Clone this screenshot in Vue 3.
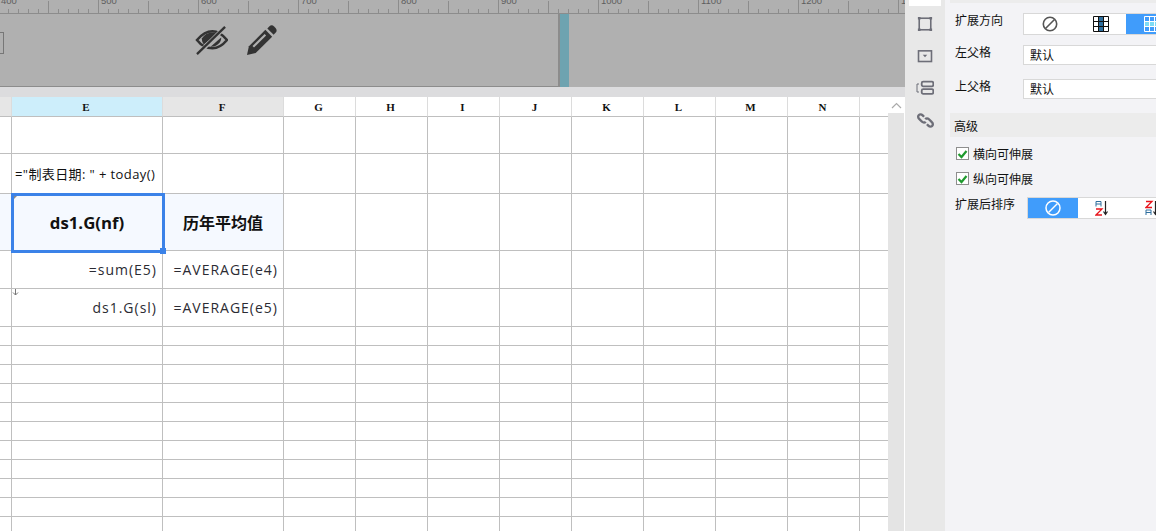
<template>
  <div class="app">
    <div class="main">
      <div class="ruler">
        <div v-for="n in rulerMarks" :key="n" class="ruler-seg"><span>{{ n }}</span></div>
      </div>
      <div class="canvas">
        <div class="page">
          <div class="page-box"></div>
          <div class="page-tools">
            <svg width="33" height="31" viewBox="0 0 34 32">
              <path d="M2 15.5C8 8.5 13 6.5 18 6.5s10 3 15 9c-5 6-10 8.500-15 8.500S7 22 2 15.500Z" fill="none" stroke="#333" stroke-width="2.600" />
              <path d="M7 14c3-5 8-7 13-6l3 1-14 11c-1.500-2-2-4-2-6Z" fill="#333" />
              <path d="M16 22.500 27 13c.5 5-5 10-11 9.500Z" fill="#333" />
              <path d="M2 31 31 2" stroke="#b0b0b0" stroke-width="4.500" />
              <path d="M2 30 31 2" stroke="#333" stroke-width="2.400" />
            </svg>
            <svg width="31" height="31" viewBox="0 0 32 32">
              <path d="M1 31 3 22 20 5 27 12 10 29Z" fill="#333" />
              <path d="M7.500 22.500 20 10" stroke="#b0b0b0" stroke-width="2.200" />
              <path d="M22 3.500 24 1.500c1.500-1.500 3.500-1.500 5 0l1.500 1.500c1.500 1.500 1.500 3.500 0 5L28.500 10Z" fill="#333" />
            </svg>
          </div>
        </div>
        <div class="bar"></div>
      </div>
      <div class="band"></div>
      <div class="sheet-wrap">
        <div class="sheet">
          <template v-for="(r, ri) in rows" :key="ri">
            <div
              v-for="(c, ci) in columns"
              :key="ci"
              class="cell"
              :class="cellClass(ri, ci)"
              :style="{ height: r + 'px' }"
            >
              {{ cellText(ri, ci) }}
              <template v-if="ri === 3 && ci === 1">
                <span class="select-box"></span>
                <span class="select-handle"></span>
                <span class="corner-mark"></span>
              </template>
              <svg v-if="ri === 5 && ci === 1" class="down-mark" width="7" height="7" viewBox="0 0 7 7">
                <path d="M3.500 0v6M1 3.500 3.500 6 6 3.500" fill="none" stroke="#777" />
              </svg>
            </div>
          </template>
        </div>
        <div class="scroll">
          <div class="scroll-up">
            <svg width="11" height="7" viewBox="0 0 11 7"><path d="M1 6 5.500 1.500 10 6" fill="none" stroke="#aaa" stroke-width="1.200" /></svg>
          </div>
        </div>
      </div>
    </div>

    <div class="strip">
      <div class="strip-top"></div>
      <svg width="16" height="16" viewBox="0 0 18 18" class="strip-icon first">
        <rect x="2.500" y="2.500" width="13" height="13" fill="none" stroke="#6d6e78" stroke-width="1.800" />
        <path d="M1 1h3v3H1zM14 1h3v3h-3zM1 14h3v3H1zM14 14h3v3h-3z" fill="#6d6e78" />
      </svg>
      <svg width="16" height="16" viewBox="0 0 18 18" class="strip-icon second">
        <rect x="1.700" y="3.200" width="14.600" height="12" fill="none" stroke="#6d6e78" stroke-width="1.800" />
        <path d="M6.500 7.500h5L9 10.500Z" fill="#6d6e78" />
      </svg>
      <svg width="18" height="18" viewBox="0 0 18 18" class="strip-icon third">
        <rect x="5.700" y="2.700" width="11.600" height="4.600" rx="1.500" fill="none" stroke="#6d6e78" stroke-width="1.800" />
        <rect x="5.700" y="10.200" width="11.600" height="4.600" rx="1.500" fill="none" stroke="#6d6e78" stroke-width="1.800" />
        <path d="M3 5H1v8h2" fill="none" stroke="#6d6e78" />
      </svg>
      <svg width="17" height="17" viewBox="0 0 18 18" class="strip-icon">
        <path d="M7.500 5 6 3.500C4.500 2 2.800 2.300 2 3.200 1 4.200.9 6 2.300 7.300l3 3c1.300 1.200 3 1.200 3.900 0M10.500 13l1.500 1.500c1.500 1.500 3.200 1.200 4 .3 1-1 1.100-2.800-.3-4.100l-3-3c-1.300-1.200-3-1.200-3.900 0" fill="none" stroke="#6d6e78" stroke-width="2.500" />
      </svg>
    </div>

    <div class="panel">
      <div class="panel-top"></div>
      <div class="form-row first-row">
        <span class="label">扩展方向</span>
        <div class="seg seg-dir">
          <div class="seg-item">
            <svg width="16" height="16" viewBox="0 0 16 16">
              <circle cx="8" cy="8" r="6.700" fill="none" stroke="#555" stroke-width="1.600" />
              <path d="M3.500 12.500 12.500 3.500" stroke="#555" stroke-width="1.600" />
            </svg>
          </div>
          <div class="seg-item">
            <svg width="16" height="16" viewBox="0 0 16 16">
              <rect x="5.500" y="1" width="5" height="14" fill="#2e6f9e" />
              <path d="M.5.500h15v15H.5zM5.500.500v15M10.500.500v15M.5 5.500h15M.5 10.500h15" fill="none" stroke="#111" />
            </svg>
          </div>
          <div class="seg-item active">
            <svg width="16" height="16" viewBox="0 0 16 16">
              <rect x="1" y="6" width="14" height="4" fill="#7fdcf5" />
              <path d="M.5.500h15v15H.5zM5.500.500v15M10.500.500v15M.5 5.500h15M.5 10.500h15" fill="none" stroke="#fff" />
            </svg>
          </div>
        </div>
      </div>
      <div class="form-row">
        <span class="label">左父格</span>
        <div class="input">默认</div>
      </div>
      <div class="form-row">
        <span class="label">上父格</span>
        <div class="input">默认</div>
      </div>
      <div class="section">高级</div>
      <label class="check first-check"><span class="box"><svg width="11" height="10" viewBox="0 0 11 10"><path d="M1.500 5 4.500 8 9.500 2" fill="none" stroke="#1f9a2e" stroke-width="2.200" /></svg></span>横向可伸展</label>
      <label class="check"><span class="box"><svg width="11" height="10" viewBox="0 0 11 10"><path d="M1.500 5 4.500 8 9.500 2" fill="none" stroke="#1f9a2e" stroke-width="2.200" /></svg></span>纵向可伸展</label>
      <div class="sort-row">
        <span class="sort-label">扩展后排序</span>
        <div class="seg seg-sort">
          <div class="seg-item active">
            <svg width="16" height="16" viewBox="0 0 16 16">
              <circle cx="8" cy="8" r="7" fill="none" stroke="#fff" stroke-width="1.500" />
              <path d="M3.500 12.500 12.500 3.500" stroke="#fff" stroke-width="1.500" />
            </svg>
          </div>
          <div class="seg-item">
            <svg width="16" height="16" viewBox="0 0 16 16">
              <path d="M1 6.500V1.500h5v5M1 4h5" fill="none" stroke="#2e6f9e" />
              <path d="M1 9h6L1 15h6" fill="none" stroke="#e8141c" stroke-width="1.300" />
              <path d="M10.500 1v13M8.500 11.500l2 3 2-3" fill="none" stroke="#222" stroke-width="1.200" />
            </svg>
          </div>
          <div class="seg-item">
            <svg width="16" height="16" viewBox="0 0 16 16">
              <path d="M1 1.500h6L1 7.500h6" fill="none" stroke="#e8141c" stroke-width="1.300" />
              <path d="M1 15V10h5v5M1 12.500h5" fill="none" stroke="#2e6f9e" />
              <path d="M10.500 1v13M8.500 11.500l2 3 2-3" fill="none" stroke="#222" stroke-width="1.200" />
            </svg>
          </div>
        </div>
      </div>
    </div>
  </div>
</template>

<script setup>
const rulerMarks = [400, 500, 600, 700, 800, 900, 1000, 1100, 1200, 1300]

const letters = ['', 'E', 'F', 'G', 'H', 'I', 'J', 'K', 'L', 'M', 'N', '']
const columns = [12, 151, 121, 72, 72, 72, 72, 72, 72, 72, 72, 28]
const rows = [20, 37, 40, 57, 38, 38, 19, 19, 19, 19, 19, 19, 19, 19, 19, 19, 19]

// 单元格内容，key 为 行-列
const contents = {
  '2-1': '="制表日期: " + today()',
  '3-1': 'ds1.G(nf)',
  '3-2': '历年平均值',
  '4-1': '=sum(E5)',
  '4-2': '=AVERAGE(e4)',
  '5-1': 'ds1.G(sl)',
  '5-2': '=AVERAGE(e5)'
}

const cellText = (ri, ci) => (ri === 0 ? letters[ci] : contents[`${ri}-${ci}`] || '')

const cellClass = (ri, ci) => ({
  head: ri === 0,
  'head-side': ri === 0 && (ci === 0 || ci === 2),
  'head-active': ri === 0 && ci === 1,
  formula: ri === 2 && ci === 1,
  title: ri === 3 && (ci === 1 || ci === 2),
  'title-latin': ri === 3 && ci === 1,
  tinted: ri === 3 && ci <= 2,
  num: (ri === 4 || ri === 5) && (ci === 1 || ci === 2),
  last: ci === columns.length - 1
})
</script>

<style scoped>
.app {
  display: flex;
  width: 1156px;
  height: 531px;
  overflow: hidden;
  background: #fff;
  font-family: "Noto Sans CJK SC", "Open Sans", sans-serif;
  color: #222;
}
.main {
  width: 905px;
  flex: none;
  display: flex;
  flex-direction: column;
}
.ruler {
  height: 13px;
  flex: none;
  display: flex;
  margin-left: -2px;
  overflow: hidden;
  background-color: #b0b0b0;
  border-bottom: 1px solid #8c8c8c;
  box-sizing: content-box;
}
.ruler-seg {
  width: 100px;
  flex: none;
  height: 13px;
  box-sizing: border-box;
  border-left: 1px solid #8c8c8c;
  overflow: hidden;
  font: 9.5px/10px "Liberation Sans", sans-serif;
  color: #5e5e5e;
  background:
    linear-gradient(#8c8c8c, #8c8c8c) 49px 1px / 1px 12px no-repeat,
    repeating-linear-gradient(90deg, #8c8c8c 0 1px, transparent 1px 10px) 9px 9px / 100% 4px no-repeat;
}
.ruler-seg span {
  display: block;
  margin: -4px 0 0 2px;
}
.canvas {
  height: 73px;
  flex: none;
  display: flex;
  background: #b0b0b0;
}
.page {
  width: 558px;
  flex: none;
  display: flex;
  align-items: center;
  border-right: 2px solid #8c8c8c;
  border-bottom: 1px solid #8c8c8c;
  box-sizing: content-box;
  height: 72px;
}
.page-box {
  width: 3px;
  height: 20px;
  flex: none;
  margin-top: -14px;
  border: 1px solid #777;
  border-left: 0;
}
.page-tools {
  display: flex;
  gap: 18px;
  margin-left: 191px;
  margin-top: -20px;
}
.bar {
  width: 9px;
  flex: none;
  background: #6ea3b0;
}
.band {
  height: 10px;
  flex: none;
  background: #dcdcde;
}
.sheet-wrap {
  flex: 1;
  min-height: 0;
  display: flex;
  overflow: hidden;
}
.sheet {
  width: 888px;
  flex: none;
  display: grid;
  grid-template-columns: 12px 151px 121px repeat(8, 72px) 28px;
  grid-auto-rows: min-content;
}
.cell {
  position: relative;
  box-sizing: border-box;
  border-right: 1px solid #bfbfbf;
  border-bottom: 1px solid #bfbfbf;
  background: #fff;
  display: flex;
  align-items: center;
  white-space: nowrap;
  font-size: 13px;
}
.cell.last {
  border-right: 0;
}
.head {
  justify-content: center;
  padding-right: 2px;
  border-right-color: #dcdcdc;
  font: 700 11px "Liberation Serif", serif;
  color: #111;
}
.head-side {
  background: #e6e6e6;
}
.head-active {
  background: #cdeefb;
}
.formula {
  padding-left: 3px;
  font: 13px "Open Sans", "Noto Sans CJK SC", sans-serif;
  letter-spacing: 0.4px;
  color: #111;
  overflow: visible;
}
.tinted {
  background: #f5f9ff;
}
.title {
  justify-content: center;
  font: 700 16px "Open Sans", "Noto Sans CJK SC", sans-serif;
  color: #111;
}
.title-latin {
  font-size: 16.8px;
}
.num {
  justify-content: flex-end;
  padding-right: 5px;
  font: 14px "Open Sans", "Noto Sans CJK SC", sans-serif;
  letter-spacing: 1px;
  color: #2b2b33;
}
.select-box {
  position: absolute;
  left: -1px;
  top: -1px;
  width: 154px;
  height: 60px;
  box-sizing: border-box;
  border: 3px solid #3b82e8;
  z-index: 2;
}
.select-handle {
  position: absolute;
  right: -4px;
  bottom: -4px;
  width: 6px;
  height: 6px;
  background: #3b82e8;
  z-index: 3;
}
.corner-mark {
  position: absolute;
  left: 2px;
  top: 2px;
  width: 0;
  height: 0;
  border-top: 3px solid #888;
  border-right: 3px solid transparent;
  z-index: 3;
}
.down-mark {
  position: absolute;
  left: 0;
  top: 0;
}
.scroll {
  width: 16px;
  flex: none;
  background: #e4e4e4;
}
.scroll-up {
  height: 16px;
  background: #fff;
  display: flex;
  align-items: center;
  justify-content: center;
}
.strip {
  width: 40px;
  flex: none;
  display: flex;
  flex-direction: column;
  align-items: center;
  background: #e8e8e8;
}
.strip-top {
  width: 32px;
  height: 6px;
  background: #fff;
}
.strip-icon {
  margin-top: 15px;
  margin-left: 0;
}
.strip-icon.first {
  margin-top: 10px;
}
.strip-icon.second {
  margin-top: 16px;
}
.strip-icon.third {
  margin-top: 15px;
}
.panel {
  flex: 1;
  min-width: 0;
  background: #f3f3f6;
  padding-left: 5px;
  overflow: hidden;
  font-size: 12px;
  color: #111;
}
.panel-top {
  height: 3px;
  background: #ececec;
}
.form-row {
  display: flex;
  height: 20px;
  margin-top: 14px;
}
.first-row {
  height: 22px;
  margin-top: 10px;
  margin-bottom: -4px;
}
.label {
  width: 68px;
  flex: none;
  margin-left: 5px;
  margin-top: -3px;
  line-height: 20px;
}
.seg {
  display: flex;
  flex: none;
  box-sizing: border-box;
  border: 1px solid #d8d8d8;
  background: #fff;
}
.seg-dir {
  width: 150px;
  height: 22px;
}
.seg-dir .seg-item {
  width: 51px;
}
.seg-item {
  flex: none;
  display: flex;
  align-items: center;
  justify-content: center;
}
.seg-item.active {
  background: #409cfb;
}
.input {
  width: 150px;
  flex: none;
  box-sizing: border-box;
  background: #fff;
  border: 1px solid #d8d8d8;
  padding-left: 6px;
  line-height: 18px;
}
.section {
  height: 24px;
  margin-top: 14px;
  padding-left: 4px;
  line-height: 26px;
  background: #ececec;
}
.check {
  display: flex;
  align-items: center;
  gap: 4px;
  height: 13px;
  margin: 11px 0 0 6px;
  line-height: 13px;
}
.first-check {
  margin-top: 10px;
}
.check + .check {
  margin-top: 12px;
}
.box {
  width: 13px;
  height: 13px;
  flex: none;
  box-sizing: border-box;
  border: 1px solid #8e8e8e;
  background: #fff;
  display: flex;
  align-items: center;
  justify-content: center;
}
.sort-row {
  display: flex;
  margin-top: 12px;
}
.sort-label {
  width: 72px;
  flex: none;
  margin-left: 5px;
  margin-top: -3px;
  line-height: 20px;
}
.seg-sort {
  width: 150px;
  height: 22px;
}
.seg-sort .seg-item {
  width: 50px;
}
</style>
